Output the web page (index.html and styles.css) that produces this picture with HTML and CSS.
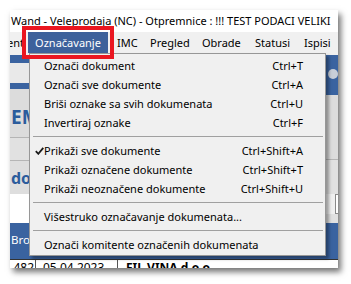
FILE: index.html
```html
<!DOCTYPE html>
<html>
<head>
<meta charset="utf-8">
<link rel="stylesheet" href="styles.css">
</head>
<body>
<div class="window">
  <div class="titlebar"><span class="title">Wand - Veleprodaja (NC) - Otpremnice : !!! TEST PODACI VELIKI</span></div>
  <div class="menubar">
    <span class="mi mi-cut"><span>Dokument</span></span>
    <span class="mi active">Označavanje</span>
    <span class="mi mi-imc">IMC</span>
    <span class="mi mi-pre">Pregled</span>
    <span class="mi mi-obr">Obrade</span>
    <span class="mi mi-sta">Statusi</span>
    <span class="mi mi-isp">Ispisi</span>
  </div>
  <div class="content">
    <div class="upper">
      <div class="main">
        <div class="m-top"></div>
        <div class="m-band1"></div>
        <div class="m-light"></div>
        <div class="m-band2"></div>
        <div class="m-head"><span class="big">EMNICE</span></div>
        <div class="m-filter"></div>
        <div class="m-sub"><span class="sub">dokumenti</span></div>
        <div class="m-white"></div>
      </div>
      <div class="side">
        <div class="m-top"></div>
        <div class="s-blue"><span class="s-icon"></span></div>
        <div class="s-gray"></div>
        <div class="s-gray2"></div>
        <div class="s-input"></div>
        <div class="s-rest"></div>
      </div>
    </div>
    <div class="grid-head"><span class="gh-col">Broj</span></div>
    <div class="grid-row">
      <span class="gc gc1">482</span>
      <span class="gc gc2">05.04.2023</span>
      <span class="gc gc3">FIL VINA d.o.o.</span>
    </div>
  </div>

  <div class="dropdown">
    <div class="dd-row"><span class="chk"></span><span class="lbl">Označi dokument</span><span class="sc">Ctrl+T</span></div>
    <div class="dd-row"><span class="chk"></span><span class="lbl">Označi sve dokumente</span><span class="sc">Ctrl+A</span></div>
    <div class="dd-row"><span class="chk"></span><span class="lbl">Briši oznake sa svih dokumenata</span><span class="sc">Ctrl+U</span></div>
    <div class="dd-row"><span class="chk"></span><span class="lbl">Invertiraj oznake</span><span class="sc">Ctrl+F</span></div>
    <div class="dd-sep"></div>
    <div class="dd-row"><span class="chk"><svg width="9" height="8" viewBox="0 0 9 8"><path d="M0.8 4.2 L3.3 6.8 L8.3 0.8" fill="none" stroke="#1a1a1a" stroke-width="1.8"/></svg></span><span class="lbl">Prikaži sve dokumente</span><span class="sc">Ctrl+Shift+A</span></div>
    <div class="dd-row"><span class="chk"></span><span class="lbl">Prikaži označene dokumente</span><span class="sc">Ctrl+Shift+T</span></div>
    <div class="dd-row"><span class="chk"></span><span class="lbl">Prikaži neoznačene dokumente</span><span class="sc">Ctrl+Shift+U</span></div>
    <div class="dd-sep"></div>
    <div class="dd-row"><span class="chk"></span><span class="lbl">Višestruko označavanje dokumenata...</span><span class="sc"></span></div>
    <div class="dd-sep"></div>
    <div class="dd-row"><span class="chk"></span><span class="lbl">Označi komitente označenih dokumenata</span><span class="sc"></span></div>
  </div>
</div>
<div class="annot"></div>
</body>
</html>
```

FILE: styles.css
```css
* { box-sizing: border-box; }
html, body { margin: 0; padding: 0; background: #ffffff; }
body {
  font-family: "Noto Sans", "Open Sans", sans-serif;
  font-size: 11px;
  color: #000;
  position: relative;
  width: 351px;
  height: 284px;
  overflow: hidden;
}

.window {
  position: relative;
  margin: 10px 0 0 10px;
  width: 328px;
  height: 258px;
  overflow: hidden;
  background: #f0f0f0;
  display: flex;
  flex-direction: column;
  box-shadow: 3px 4px 6px rgba(0, 0, 0, 0.55);
}

.titlebar {
  height: 22px;
  flex: none;
  background: #fff;
  white-space: nowrap;
  overflow: hidden;
  line-height: 16px;
  padding-top: 3px;
}
.title { margin-left: 1px; }

.menubar {
  height: 21px;
  flex: none;
  display: flex;
  background: #f0f0f0;
  white-space: nowrap;
  line-height: 21px;
}
.mi { flex: none; padding: 0 0 0 9px; }
.mi-cut {
  width: 18px;
  padding: 0 4px 0 0;
  overflow: hidden;
  display: flex;
  justify-content: flex-end;
}
.mi.active {
  width: 80px;
  text-align: center;
  background: #3d619b;
  color: #fff;
  padding: 0;
}
.mi-imc { width: 33px; }
.mi-pre { width: 52px; }
.mi-obr { width: 53px; }
.mi-sta { width: 49px; }

.content { flex: 1; display: flex; flex-direction: column; }
.upper { height: 170px; display: flex; flex: none; }
.main { flex: 1; display: flex; flex-direction: column; }
.side { width: 12px; display: flex; flex-direction: column; }

.m-top { height: 2px; background: #f0f0f0; }
.m-band1 { height: 8px; background: #3a63a0; }
.m-light { height: 20px; background: #e9e9e9; }
.m-band2 { height: 6px; background: #3a63a0; }
.m-head {
  height: 49px;
  background: #dcdcdc;
  border-bottom: 1px solid #b5b5b5;
  padding: 17px 0 0 1px;
  overflow: hidden;
}
.big { font-weight: bold; font-size: 19px; line-height: 22px; color: #2b5c9c; }
.m-filter { height: 23px; background: #e1e1e1; border-bottom: 1px solid #b5b5b5; }
.m-sub { height: 33px; background: #dedede; padding: 7px 0 0 1px; overflow: hidden; }
.sub { font-weight: bold; font-size: 16px; line-height: 20px; color: #2b5c9c; }
.m-white { flex: 1; background: #fff; }

.s-blue { height: 40px; background: #3a63a0; }
.s-icon {
  display: block;
  width: 10px; height: 10px;
  margin: 14px 0 0 2px;
  border-radius: 50%;
  background: #c9cfd8;
}
.s-gray { height: 65px; background: #dcdcdc; border-bottom: 1px solid #b5b5b5; }
.s-gray2 { height: 34px; background: #e1e1e1; }
.s-input { height: 20px; background: #fff; border: 1px solid #8a8a8a; border-right: none; margin-left: 9px; }
.s-rest { flex: 1; background: #e1e1e1; }

.grid-head {
  height: 36px;
  flex: none;
  background: #3a63a0;
  color: #fff;
  line-height: 34px;
  padding-left: 1px;
  font-size: 11.5px;
}
.grid-row {
  flex: 1;
  display: flex;
  background: #fff;
  border-top: 1px solid #333;
  line-height: 16px;
  white-space: nowrap;
}
.gc { font-size: 12px; }
.gc1 { width: 26px; text-align: right; padding-right: 1px; border-right: 1px solid #555; }
.gc2 { width: 82px; padding-left: 7px; border-right: 1px solid #555; }
.gc3 { padding-left: 8px; font-weight: bold; }

.dropdown {
  position: absolute;
  left: 19px;
  top: 43px;
  width: 297px;
  background: #f0f0f0;
  border: 1px solid #979797;
  box-shadow: 3px 3px 3px rgba(0, 0, 0, 0.35);
  padding: 2px 0 1px 0;
}
.dd-row {
  height: 19px;
  display: flex;
  align-items: center;
  padding: 0 22px 0 0;
  white-space: nowrap;
}
.chk { width: 14px; flex: none; display: flex; padding-left: 5px; }
.lbl { flex: 1; }
.sc { text-align: right; }
.dd-sep {
  height: 1px;
  background: #a0a0a0;
  margin: 4px 2px 4px 3px;
}

.annot {
  position: absolute;
  left: 22px;
  top: 26px;
  width: 92px;
  height: 33px;
  border: 4px solid #ea1620;
}
```
